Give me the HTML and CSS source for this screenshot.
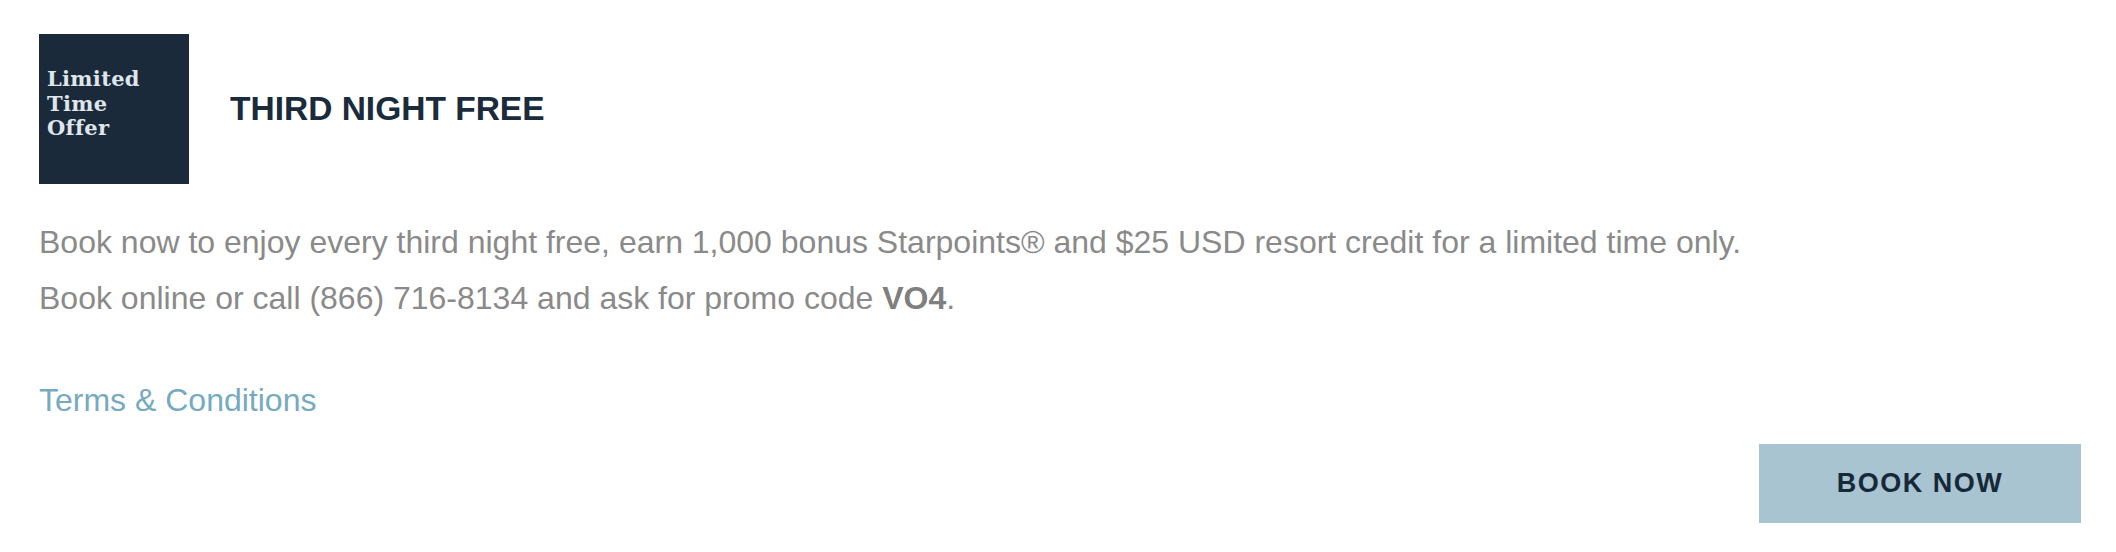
FILE: index.html
```html
<!DOCTYPE html>
<html lang="en">
<head>
<meta charset="utf-8">
<title>Third Night Free</title>
<link rel="stylesheet" href="styles.css">
</head>
<body>
<div class="offer">
  <div class="offer-head">
    <div class="badge">
      <span>Limited</span>
      <span>Time</span>
      <span>Offer</span>
    </div>
    <h2 class="title">THIRD NIGHT FREE</h2>
  </div>
  <div class="desc">
    <p>Book now to enjoy every third night free, earn 1,000 bonus Starpoints® and $25 USD resort credit for a limited time only.</p>
    <p>Book online or call (866) 716-8134 and ask for promo code <strong>VO4</strong>.</p>
  </div>
  <a class="terms" href="#">Terms &amp; Conditions</a>
  <div class="actions">
    <a class="book" href="#">BOOK NOW</a>
  </div>
</div>
</body>
</html>
```

FILE: styles.css
```css
html, body {
  margin: 0;
  padding: 0;
  background: #ffffff;
}

.offer {
  padding: 34px 35px 29px 39px;
  font-family: "Liberation Sans", Arial, sans-serif;
}

.offer-head {
  display: flex;
  align-items: center;
  gap: 41px;
}

.badge {
  width: 150px;
  height: 150px;
  box-sizing: border-box;
  background: #1a2a3b;
  color: #dfe5ea;
  font-family: "DejaVu Serif", "Liberation Serif", serif;
  font-weight: 700;
  font-size: 21px;
  line-height: 24.5px;
  letter-spacing: 0.3px;
  padding: 33px 0 0 8px;
  display: flex;
  flex-direction: column;
}

.title {
  margin: 0;
  font-size: 33.5px;
  font-weight: 700;
  color: #1a2b3c;
  line-height: 40px;
}

.desc {
  margin-top: 30px;
  color: #8a8a8a;
  font-size: 32px;
  line-height: 56px;
}

.desc p {
  margin: 0;
}

.desc strong {
  font-weight: 700;
  color: #7f7f7f;
}

.terms {
  display: block;
  width: max-content;
  margin-top: 54px;
  font-size: 32px;
  line-height: 40px;
  color: #76aac3;
  text-decoration: none;
}

.actions {
  display: flex;
  justify-content: flex-end;
  margin-top: 24px;
}

.book {
  display: flex;
  align-items: center;
  justify-content: center;
  width: 322px;
  height: 79px;
  background: #a8c4d0;
  color: #172839;
  font-size: 27px;
  font-weight: 700;
  letter-spacing: 1.5px;
  text-decoration: none;
}
```
